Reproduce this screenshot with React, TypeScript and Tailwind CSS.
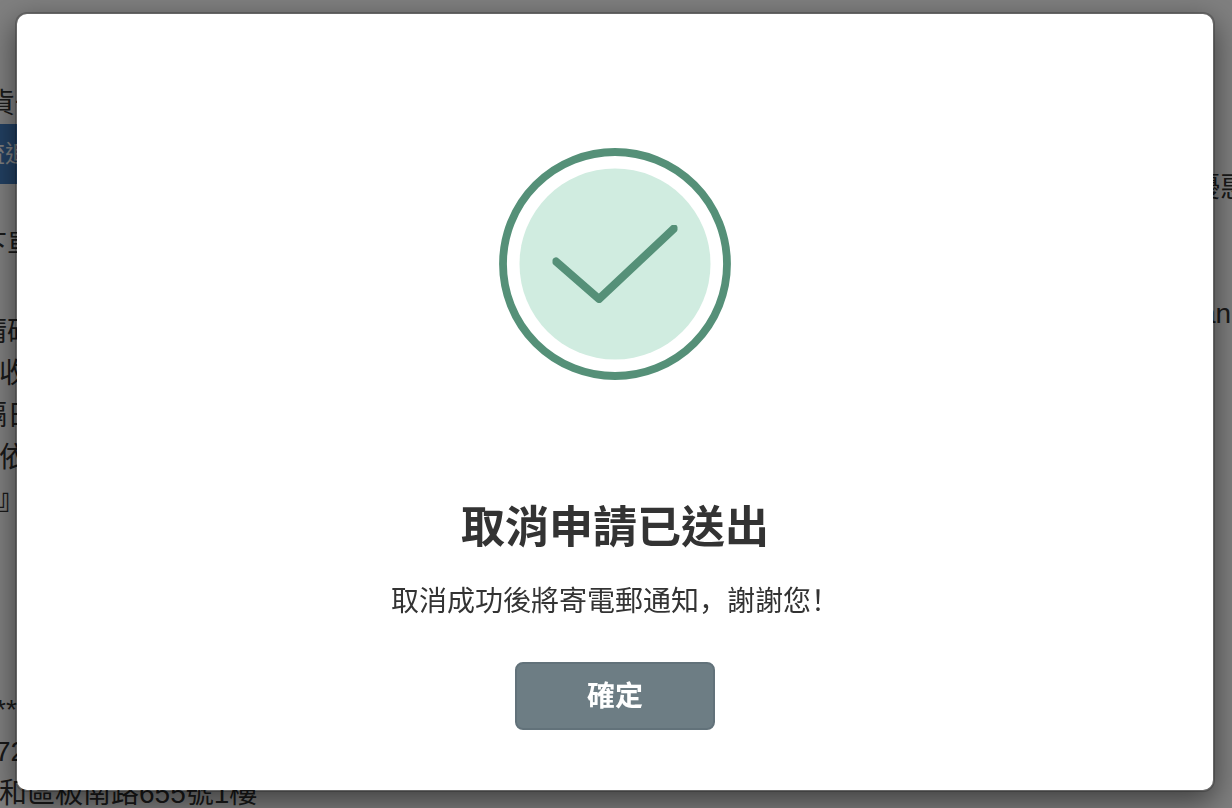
import { useState } from 'react';

const noticeLines = [
  { text: '請確', className: '-ml-5' },
  { text: '收', className: '' },
  { text: '隔日', className: '-ml-5' },
  { text: '依', className: '' },
  { text: '』', className: '-ml-0.5 font-bold' },
];

function SuccessIcon() {
  return (
    <svg className="w-[232px] h-[232px]" viewBox="0 0 232 232" fill="none" aria-hidden="true">
      <clipPath id="check-bounds">
        <rect x="53.5" y="77" width="125" height="78" />
      </clipPath>
      <circle cx="116" cy="116" r="112" stroke="#559078" strokeWidth="7.8" />
      <circle cx="116" cy="116" r="95.5" fill="#d0ece0" />
      <path
        d="M57 113.5L100 151L175 80.5"
        stroke="#559078"
        strokeWidth="8"
        strokeLinecap="round"
        strokeLinejoin="round"
        clipPath="url(#check-bounds)"
      />
    </svg>
  );
}

function OrderPage() {
  return (
    <main className="flex justify-between min-h-screen bg-white text-[#333] text-[28px] leading-[42px] whitespace-nowrap">
      <section className="-ml-px pt-[83px]">
        <p className="-ml-3">貨一</p>
        <button type="button" className="block h-[60px] w-24 -mt-px -ml-6 pl-1.5 bg-[#4581c5] text-white text-[24px] text-left">
          流追
        </button>
        <p className="-ml-5 mt-[41px]">下單</p>
        <div className="mt-11">
          {noticeLines.map((line) => (
            <p key={line.text} className={line.className}>{line.text}</p>
          ))}
        </div>
        <p className="-ml-1 mt-[168px]">****</p>
        <p className="-ml-1">72</p>
        <p>和區板南路655號1樓</p>
      </section>
      <aside className="w-10 pt-[167px]">
        <p>優惠</p>
        <p className="mt-[84px] pl-2">an</p>
      </aside>
    </main>
  );
}

export default function App() {
  const [open, setOpen] = useState(true);

  return (
    <div className="h-screen overflow-hidden font-['Liberation_Sans','Noto_Sans_CJK_TC',sans-serif]">
      <OrderPage />

      {open && (
        <div className="fixed inset-0 bg-black/50 pt-3 pl-[15px] pr-[17px]">
          <div
            role="dialog"
            aria-modal="true"
            aria-labelledby="cancel-title"
            className="flex flex-col items-center rounded-xl border-2 border-black/20 bg-white bg-clip-padding pt-[134px] pb-[60px] text-center text-[#333] shadow-[0_10px_30px_rgba(0,0,0,0.5)]"
          >
            <SuccessIcon />
            <h1 id="cancel-title" className="mt-[118px] text-[44px] leading-[60px] font-bold">
              取消申請已送出
            </h1>
            {/* SC keeps the comma and exclamation mark at the left of their box */}
            <p className="mt-5 font-['Noto_Sans_CJK_SC',sans-serif] text-[28px] leading-[42px]">
              取消成功後將寄電郵通知，謝謝您！
            </p>
            <button
              type="button"
              onClick={() => setOpen(false)}
              className="mt-[42px] h-[68px] w-[200px] rounded-lg border-2 border-[#62727a] bg-[#6d7d84] pt-0.5 text-[28px] font-bold text-white"
            >
              確定
            </button>
          </div>
        </div>
      )}
    </div>
  );
}
